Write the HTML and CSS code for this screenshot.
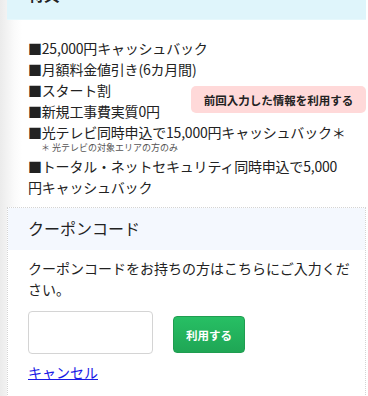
FILE: index.html
```html
<!DOCTYPE html>
<html lang="ja">
<head>
  <meta charset="utf-8" />
  <meta name="viewport" content="width=device-width, initial-scale=1" />
  <title>特典</title>
  <link rel="stylesheet" href="styles.css">
</head>
<body>
  <div class="benefit">
    <h2 class="benefit-head">特典</h2>
    <ul class="benefit-list">
      <li>■25,000円キャッシュバック</li>
      <li>■月額料金値引き(6カ月間)</li>
      <li>■スタート割</li>
      <li>■新規工事費実質0円</li>
      <li>■光テレビ同時申込で15,000円キャッシュバック＊
        <span class="note">＊ 光テレビの対象エリアの方のみ</span>
      </li>
      <li>■トータル・ネットセキュリティ同時申込で5,000<br>円キャッシュバック</li>
    </ul>
    <button class="reuse-btn" type="button">前回入力した情報を利用する</button>
  </div>

  <div class="coupon">
    <h3 class="coupon-head">クーポンコード</h3>
    <div class="coupon-body">
      <p>クーポンコードをお持ちの方はこちらにご入力くだ<br>さい。</p>
      <div class="coupon-form">
        <input type="text" class="coupon-input">
        <button type="button" class="coupon-btn">利用する</button>
      </div>
      <a href="#" class="cancel">キャンセル</a>
    </div>
  </div>
</body>
</html>
```

FILE: styles.css
```css
body {
  font-family: "Noto Sans CJK JP", "Noto Sans", sans-serif;
  margin: 0;
  padding: 0;
  color: #222;
  font-size: 14px;
  background: linear-gradient(to right, #ebebeb 0, #fafafa 14px, #fff 22px);
  overflow: hidden;
}
.benefit {
  position: relative;
  margin: 0 2px 0 7px;
}
.benefit-head {
  margin: -18px 0 0;
  padding: 0 21px 13px;
  font-size: 16px;
  line-height: 24px;
  background-color: #dff5fb;
  border-bottom: 1px solid #e6f8fc;
}
.benefit-list {
  list-style: none;
  margin: 18px 0 0;
  padding: 0 4px 9px 21px;
  line-height: 21px;
  letter-spacing: -0.2px;
}
.note {
  display: block;
  margin: -1px 0 3px;
  font-size: 9px;
  line-height: 11px;
  color: #555;
  padding-left: 13px;
  letter-spacing: 0;
}
.reuse-btn {
  position: absolute;
  top: 104px;
  right: 0;
  width: 175px;
  height: 27px;
  border: none;
  border-radius: 5px;
  background-color: #ffd9d9;
  font-family: inherit;
  font-size: 11.5px;
  font-weight: bold;
  color: #222;
  padding: 0;
}
.coupon {
  margin: 0 2px 0 7px;
  border: 1px dotted #d4d4d4;
  border-bottom: none;
  background-color: #fff;
}
.coupon-head {
  margin: 0;
  padding: 0 20px;
  height: 42px;
  line-height: 40px;
  font-size: 16px;
  font-weight: normal;
  background-color: #f4f8fe;
}
.coupon-body {
  padding: 8px 4px 20px 20px;
}
.coupon-body p {
  margin: 0;
  line-height: 21px;
}
.coupon-form {
  display: flex;
  align-items: flex-start;
  gap: 20px;
  margin-top: 11px;
}
.coupon-input {
  width: 125px;
  height: 43px;
  box-sizing: border-box;
  border: 1px solid #d4d4d4;
  border-radius: 4px;
  margin: 0;
}
.coupon-btn {
  margin-top: 5px;
  width: 72px;
  height: 37px;
  border: 1px solid #1f9d50;
  border-radius: 4px;
  background: linear-gradient(#27bf64, #1fa655);
  color: #fff;
  font-family: inherit;
  font-size: 11.5px;
  font-weight: bold;
  padding: 0;
}
.cancel {
  display: inline-block;
  margin-top: 8px;
  line-height: 21px;
  color: #1a1ae6;
}
```
